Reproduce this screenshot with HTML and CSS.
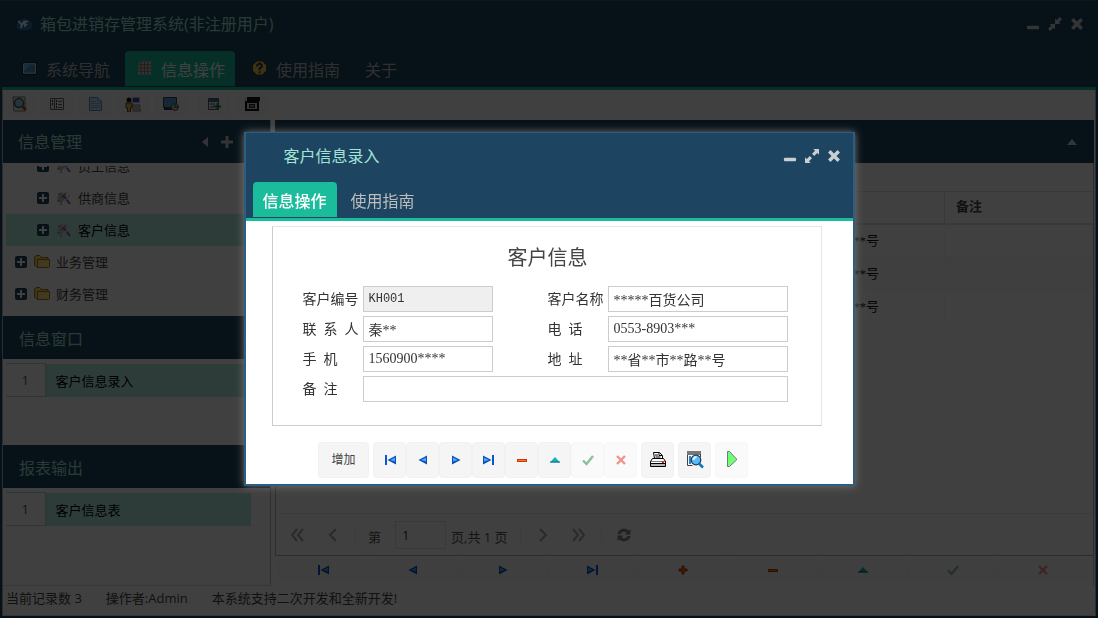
FILE: index.html
```
<!DOCTYPE html>
<html lang="zh-CN">
<head>
<meta charset="utf-8">
<title>箱包进销存管理系统</title>
<link rel="stylesheet" href="styles.css">
</head>
<body>
<svg class="sprite" aria-hidden="true">
  <symbol id="first" viewBox="0 0 16 16"><path d="M3 3h2v10H3z" fill="#0a58c8"/><path d="M14 3.500v9L5.500 8z" fill="#0b4fb8"/><path d="M13 5.500v4L8 8z" fill="#4aa8ff"/></symbol>
  <symbol id="prev" viewBox="0 0 16 16"><path d="M12 3.500v9L3.500 8z" fill="#0b4fb8"/><path d="M11 5.500v4L6 8z" fill="#4aa8ff"/></symbol>
  <symbol id="next" viewBox="0 0 16 16"><path d="M4 3.500v9L12.500 8z" fill="#0b4fb8"/><path d="M5 5.500v4L10 8z" fill="#4aa8ff"/></symbol>
  <symbol id="last" viewBox="0 0 16 16"><path d="M11 3h2v10h-2z" fill="#0a58c8"/><path d="M2 3.500v9L10.500 8z" fill="#0b4fb8"/><path d="M3 5.500v4L8 8z" fill="#4aa8ff"/></symbol>
  <symbol id="plus" viewBox="0 0 16 16"><path d="M7 4h2v3h3v2H9v3H7V9H4V7h3z" fill="#ff6a1c" stroke="#b83200"/></symbol>
  <symbol id="minus" viewBox="0 0 16 16"><path d="M3 7h10v3H3z" fill="#c83a00"/><path d="M4 8h8v1H4z" fill="#ff7a2c"/></symbol>
  <symbol id="up" viewBox="0 0 16 16"><path d="M8 5l5 5.500H3z" fill="#16b0bd"/><path d="M3 9.500h10v1H3z" fill="#08707c"/></symbol>
  <symbol id="check" viewBox="0 0 16 16"><path d="M3 8.500L6.500 12 13 4" fill="none" stroke="#8bbd9f" stroke-width="2.400"/></symbol>
  <symbol id="cross" viewBox="0 0 16 16"><path d="M4 4l8 8M12 4l-8 8" fill="none" stroke="#ef928a" stroke-width="2.400"/></symbol>
  <symbol id="min" viewBox="0 0 16 16"><rect x="1" y="10" width="14" height="4" rx="1.500" fill="currentColor"/></symbol>
  <symbol id="close" viewBox="0 0 16 16"><path d="M4 4l8 8M12 4l-8 8" fill="none" stroke="currentColor" stroke-width="4" stroke-linecap="square"/></symbol>
  <symbol id="expand" viewBox="0 0 16 16"><path d="M9.500 0H16v6.500l-2-2-3.500 3.500-2.500-2.500L11.500 2zM6.500 16H0V9.500l2 2L5.500 8 8 10.500 4.500 14z" fill="currentColor"/></symbol>
  <symbol id="shrink" viewBox="0 0 16 16"><path d="M8 8V2l2 1.500L13.500 0 16 2.500 12.500 6 14 8zM8 8v6l-2-1.500L2.500 16 0 13.500 3.500 10 2 8z" fill="currentColor"/></symbol>
  <symbol id="box" viewBox="0 0 12 12"><rect width="12" height="12" rx="2" fill="#1d4460"/><path d="M6 2v8M2 6h8" stroke="#fff" stroke-width="2"/></symbol>
  <symbol id="tool" viewBox="0 0 16 16"><path d="M1 8l3-5 2-2 1 3 4-2-1 4-4 7-3-1z" fill="#bdbdbd"/><path d="M2 4h2M5 7h3M1 11h3M4 14h2M8 4h2" stroke="#777"/><path d="M7 5l7 9" stroke="#9050c8" stroke-width="2"/><path d="M9 11l5-6" stroke="#d0d0d0" stroke-width="1.500"/></symbol>
  <symbol id="folder" viewBox="0 0 16 16"><path d="M.5 3L2 1.500h4L7.500 3.500H14v10H3L.5 11z" fill="#f4d568" stroke="#a07820"/><path d="M3.500 5.500h12v7l-1 1h-11z" fill="#ffe680" stroke="#a87c18"/></symbol>
</svg>
<div class="app">
  <header class="top">
    <div class="titlebar">
      <svg class="logo" viewBox="0 0 16 16"><path d="M4 14a4 4 0 0 1-3-6 4 4 0 0 1 4-4 4 4 0 0 1 7 1 4.500 4.500 0 0 1 0 9z" fill="#236fa8"/><path d="M2.500 5l3 4 3-4-4 7M9 11V5.500h3.500M9 8.500h2.500" stroke="#fff" stroke-width="1.600" fill="none"/></svg>
      <h1>箱包进销存管理系统(非注册用户)</h1>
      <div class="controls">
        <button aria-label="最小化"><svg><use href="#min"/></svg></button>
        <button aria-label="还原"><svg><use href="#shrink"/></svg></button>
        <button aria-label="关闭"><svg><use href="#close"/></svg></button>
      </div>
    </div>
    <nav class="tabs">
      <a href="#"><svg viewBox="0 0 16 16"><path d="M.5 2.500h15v12H.5z" fill="#4295cf" stroke="#061018"/><path d="M1.500 3.500h13v10h-13z" fill="none" stroke="#dce8f0"/><path d="M2 4h7L2 12z" fill="#72b8e4"/></svg>系统导航</a>
      <a href="#" class="active"><svg viewBox="0 0 16 16"><path d="M4 1h11v14H1V4z" fill="#d8c4c0"/><path d="M4.500 1v14M8 1v14M11.500 1v14M1 4.500h14M1 8h14M1 11.500h14" stroke="#6d7474"/></svg>信息操作</a>
      <a href="#"><svg viewBox="0 0 16 16"><path d="M5 .5h6L15.500 5v6L11 15.500H5L.5 11V5z" fill="#f0c850" stroke="#5a3000"/><path d="M5.500 6.500V5L7 3.500h2L10.500 5v1.500L8 8.500V10M8 11.500v2" stroke="#28343c" stroke-width="2" fill="none"/></svg>使用指南</a>
      <a href="#" class="plain">关于</a>
    </nav>
  </header>
  <div class="toolbar">
    <button aria-label="查找"><svg viewBox="0 0 16 16"><path d="M2 1h12v14H3z" fill="#eee" stroke="#777"/><circle cx="8" cy="7" r="4.500" fill="#8fd4ee" stroke="#555" stroke-width="1.500"/><path d="M11 10l4 4" stroke="#b84818" stroke-width="3"/></svg></button>
    <button aria-label="列表"><svg viewBox="0 0 16 16"><path d="M1.500 2.500h13v11h-13z" fill="#f4f4f4" stroke="#666"/><path d="M5.500 3v10" stroke="#666"/><path d="M7 5h1M7 8h1M7 11h1M3 5h1M3 8h1" stroke="#333" stroke-width="2"/><path d="M9 5.500h4M9 8.500h4M9 11.500h4" stroke="#666"/></svg></button>
    <button aria-label="文档"><svg viewBox="0 0 16 16"><path d="M2.500 1.500h8l4 4v9h-12z" fill="#c4e4fa" stroke="#4c91c8"/><path d="M10.500 1.500v4h4M4 5.500h5M4 7.500h9M4 9.500h9M4 11.500h9" stroke="#78b4e0" fill="none"/></svg></button>
    <button aria-label="用户"><svg viewBox="0 0 16 16"><path d="M7.500 1.500h7v5h-7z" fill="#3848c8" stroke="#bbb"/><path d="M7 9h8v2H7zM8 13h8v2H8z" fill="#eee" stroke="#777"/><circle cx="4" cy="4" r="2.500" fill="#111"/><path d="M1 7h6v5H5.500v4h-3v-4H1z" fill="#eab058" stroke="#664016"/></svg></button>
    <button aria-label="显示"><svg viewBox="0 0 16 16"><path d="M.5 1.500h13v10H.5z" fill="#4b9fce" stroke="#345"/><path d="M1 13h8" stroke="#333" stroke-width="2"/><circle cx="12" cy="11" r="3.500" fill="#d5c86b" stroke="#8040a0"/><path d="M12 8v3h3" stroke="#20a070" stroke-width="2" fill="#58a8e0"/></svg></button>
    <button class="gap" aria-label="导出"><svg viewBox="0 0 16 16"><path d="M2.500 2.500h10v11h-10z" fill="#eee" stroke="#555"/><path d="M2 3h11v3H2z" fill="#37719d"/><path d="M4 8h5M4 11h4" stroke="#555"/><path d="M11.500 7v7M8 10.500h7" stroke="#278548" stroke-width="2"/></svg></button>
    <button aria-label="窗口"><svg viewBox="0 0 16 16"><path d="M3 1h13v4H3zM1 5h14v10H1z" fill="#111"/><path d="M3 7h10v6H3z" fill="#ddd"/><path d="M5 8h6v4H5z" fill="#222"/><path d="M6 10h4" stroke="#eee"/><path d="M2 2l-1 3" stroke="#aaa"/></svg></button>
  </div>
  <div class="work">
    <aside class="side">
      <section class="panel p-tree">
        <h2>信息管理<span><svg class="left" viewBox="0 0 8 12"><path d="M7 1v10L1 6z" fill="currentColor"/></svg><svg viewBox="0 0 12 12"><path d="M4.500 0h3v4.500H12v3H7.500V12h-3V7.500H0v-3h4.500z" fill="currentColor"/></svg></span></h2>
        <ul class="tree">
          <li class="child"><svg class="exp"><use href="#box"/></svg><svg><use href="#tool"/></svg>员工信息</li>
          <li class="child"><svg class="exp"><use href="#box"/></svg><svg><use href="#tool"/></svg>供商信息</li>
          <li class="child on"><svg class="exp"><use href="#box"/></svg><svg><use href="#tool"/></svg>客户信息</li>
          <li><svg class="exp"><use href="#box"/></svg><svg><use href="#folder"/></svg>业务管理</li>
          <li><svg class="exp"><use href="#box"/></svg><svg><use href="#folder"/></svg>财务管理</li>
        </ul>
      </section>
      <section class="panel p-window">
        <h2>信息窗口<span><svg viewBox="0 0 12 12"><path d="M1 9l5-6 5 6z" fill="currentColor"/></svg></span></h2>
        <table class="list"><tr><th>1</th><td>客户信息录入</td></tr></table>
      </section>
      <section class="panel p-report">
        <h2>报表输出<span><svg viewBox="0 0 12 12"><path d="M1 9l5-6 5 6z" fill="currentColor"/></svg></span></h2>
        <table class="list"><tr><th>1</th><td>客户信息表</td></tr></table>
      </section>
    </aside>
    <main class="panel main">
      <h2><span><svg viewBox="0 0 12 12"><path d="M1 9l5-6 5 6z" fill="currentColor"/></svg></span></h2>
      <div class="data">
        <table class="grid">
          <colgroup><col><col class="c-addr"><col class="c-note"></colgroup>
          <thead><tr><th></th><th></th><th>备注</th></tr></thead>
          <tbody>
            <tr><td></td><td>**省**市**路**号</td><td></td></tr>
            <tr><td></td><td>**省**市**路**号</td><td></td></tr>
            <tr><td></td><td>**省**市**路**号</td><td></td></tr>
          </tbody>
        </table>
        <div class="pager">
          <button aria-label="首页"><svg viewBox="0 0 14 14"><path d="M7 1L2 7l5 6M13 1L8 7l5 6"/></svg></button>
          <button aria-label="上一页"><svg viewBox="0 0 14 14"><path d="M10 1L4 7l6 6"/></svg></button>
          <i></i>
          <label for="page">第</label><input id="page" value="1"><span>页,共 1 页</span>
          <i></i>
          <button aria-label="下一页"><svg viewBox="0 0 14 14"><path d="M4 1l6 6-6 6"/></svg></button>
          <button aria-label="末页"><svg viewBox="0 0 14 14"><path d="M1 1l5 6-5 6M7 1l5 6-5 6"/></svg></button>
          <i></i>
          <button class="refresh" aria-label="刷新"><svg viewBox="0 0 14 14"><path d="M.5 6a6.500 6.500 0 0 1 11-3.500L13.500 1v5.500H8L9.500 4.500A4 4 0 0 0 3.500 6zM13.500 8a6.500 6.500 0 0 1-11 3.500L.5 13V7.500H6L4.500 9.500A4 4 0 0 0 10.500 8z"/></svg></button>
        </div>
      </div>
      <div class="records">
        <button aria-label="首条"><svg><use href="#first"/></svg></button>
        <button aria-label="上一条"><svg><use href="#prev"/></svg></button>
        <button aria-label="下一条"><svg><use href="#next"/></svg></button>
        <button aria-label="末条"><svg><use href="#last"/></svg></button>
        <button aria-label="新增"><svg><use href="#plus"/></svg></button>
        <button aria-label="删除"><svg><use href="#minus"/></svg></button>
        <button aria-label="编辑"><svg><use href="#up"/></svg></button>
        <button aria-label="保存"><svg><use href="#check"/></svg></button>
        <button aria-label="取消"><svg><use href="#cross"/></svg></button>
      </div>
    </main>
  </div>
  <footer class="status"><span>当前记录数 3</span><span>操作者:Admin</span><span>本系统支持二次开发和全新开发!</span></footer>
</div>
<div class="overlay">
  <section class="dialog" role="dialog" aria-labelledby="dlg-title">
    <header>
      <div class="dlg-title">
        <h2 id="dlg-title">客户信息录入</h2>
        <div class="controls">
          <button aria-label="最小化"><svg><use href="#min"/></svg></button>
          <button aria-label="最大化"><svg><use href="#expand"/></svg></button>
          <button aria-label="关闭"><svg><use href="#close"/></svg></button>
        </div>
      </div>
      <nav class="tabs"><a href="#" class="active">信息操作</a><a href="#">使用指南</a></nav>
    </header>
    <form class="card">
      <h3>客户信息</h3>
      <div class="fields">
        <label for="f-id">客户编号</label><input id="f-id" class="code" value="KH001" readonly>
        <label for="f-name" class="second">客户名称</label><input id="f-name" value="*****百货公司">
        <label for="f-man">联&ensp;系&ensp;人</label><input id="f-man" value="秦**">
        <label for="f-tel" class="second">电&ensp;话</label><input id="f-tel" value="0553-8903***">
        <label for="f-mob">手&ensp;机</label><input id="f-mob" value="1560900****">
        <label for="f-addr" class="second">地&ensp;址</label><input id="f-addr" value="**省**市**路**号">
        <label for="f-note">备&ensp;注</label><input id="f-note" class="wide" value="">
      </div>
    </form>
    <div class="actions">
      <button class="add">增加</button>
      <div class="group">
        <button aria-label="首条"><svg><use href="#first"/></svg></button>
        <button aria-label="上一条"><svg><use href="#prev"/></svg></button>
        <button aria-label="下一条"><svg><use href="#next"/></svg></button>
        <button aria-label="末条"><svg><use href="#last"/></svg></button>
        <button aria-label="删除"><svg><use href="#minus"/></svg></button>
        <button aria-label="编辑"><svg><use href="#up"/></svg></button>
        <button class="off" aria-label="保存"><svg><use href="#check"/></svg></button>
        <button class="off" aria-label="取消"><svg><use href="#cross"/></svg></button>
      </div>
      <button aria-label="打印"><svg class="big" viewBox="0 0 18 18"><path d="M5.500 7.500l-1-6h6l3 3v3" fill="#fff" stroke="#000"/><path d="M10 1.500v3h3M6 4h3M6.500 6h5" stroke="#000" fill="none"/><path d="M3.500 7.500h11l2 3v5h-15v-5z" fill="#fff" stroke="#000"/><path d="M1.500 10.500h15" stroke="#000" stroke-dasharray="1 1"/><path d="M2 12h14v1H2z" fill="#000"/><path d="M2 13h14v2H2z" fill="#b8b4c0"/><path d="M13 10h2v2h-2z" fill="#e22"/></svg></button>
      <button aria-label="预览"><svg class="big" viewBox="0 0 18 18"><path d="M1 0h14v4H1z" fill="#777"/><path d="M1.500 4v10.500h5M14.500 3v3" stroke="#444" fill="none"/><path d="M3 5h2v8H3z" fill="#2a83d5"/><circle cx="10" cy="9" r="4.800" fill="#54baf8" stroke="#24384c" stroke-width="1.200"/><path d="M7.500 9a3 3 0 0 1 3-3" stroke="#d8f4ff" stroke-width="2" fill="none"/><path d="M13 12.500l4 4" stroke="#0875c5" stroke-width="2.500"/></svg></button>
      <button class="off" aria-label="执行"><svg class="big" viewBox="0 0 18 18"><path d="M4.500 .5v15h2L13.500 9V8l-7-7.500z" fill="#6dff74" stroke="#777"/></svg></button>
    </div>
  </section>
</div>
</body>
</html>
```
FILE: styles.css
```
* { box-sizing: border-box; }
body {
  margin: 0;
  font: 13px/20px "Open Sans", "Noto Sans CJK SC", sans-serif;
  color: #444;
  background: #1d4460;
}
.sprite { position: absolute; width: 0; height: 0; }
h1, h2, h3, ul { margin: 0; padding: 0; font-weight: 400; }
svg { display: block; flex: none; width: 16px; height: 16px; }
button { display: flex; align-items: center; justify-content: center; border: 0; padding: 0; background: none; color: inherit; font: inherit; }
a { color: inherit; text-decoration: none; }
table { border-collapse: collapse; }

.app { display: flex; flex-direction: column; height: 100vh; border: 2px solid #1d4460; border-top-width: 0; }
.top { flex: none; background: #1d4460; border-bottom: 3px solid #1abc9c; border-top: 1px solid #2f5f85; }
.titlebar { display: flex; align-items: center; height: 46px; padding: 0 12px 0 14px; }
.logo { margin-right: 8px; }
.titlebar h1, .dlg-title h2, .panel h2 { font-size: 16px; line-height: 24px; color: #a3e4d7; }
.controls { display: flex; gap: 8px; margin-left: auto; color: #c8ced2; }
.controls svg { width: 14px; height: 14px; }
.tabs { display: flex; font-size: 16px; color: #bdbdbd; }
.top .tabs { gap: 5px; padding: 4px 8px 1px; }
.tabs a { display: flex; align-items: center; height: 35px; padding: 3px 10px 0; border-radius: 4px 4px 0 0; }
.top .tabs a { padding-left: 12px; }
.top .tabs svg { margin: 0 9px 4px 0; width: 15px; }
.top .tabs a.plain { padding-left: 10px; }
.tabs a.active { background: #1abc9c; color: #fff; }

.toolbar { display: flex; flex: none; gap: 6px; height: 30px; padding: 2px 0 4px; background: #fff; }
.toolbar button { width: 32px; height: 24px; border: 1px solid #f7f7f7; border-radius: 4px; background: #fcfcfc; }
.toolbar .gap { margin-left: 5px; }
.work { display: flex; flex: 1; gap: 4px; min-height: 0; padding-right: 1px; background: #fff; }
.work, .toolbar, .status { border-left: 1px solid #a8b4c0; border-right: 1px solid #a8b4c0; }
.side { display: flex; flex-direction: column; width: 268px; flex: none; border-right: 1px solid #a9c8c0; border-bottom: 1px solid #ddd; }
.panel { display: flex; flex-direction: column; min-height: 0; }
.panel h2 { display: flex; align-items: center; flex: none; height: 43px; padding: 0 15px; background: #1d4460; }
.panel h2 span { display: flex; align-items: center; gap: 12px; margin-left: auto; color: #c8ced2; }
.panel h2 svg { width: 12px; height: 12px; }
.panel h2 .left { width: 8px; }
.side .panel h2 { padding-right: 37px; }
.p-tree { flex: 196 0 0; }
.p-window { flex: 129 0 0; }
.p-report { flex: 140 0 0; }
.side .p-window h2, .side .p-report h2 { padding: 3px 16px 0; }
.tree { display: flex; flex: 1; flex-direction: column; justify-content: flex-end; min-height: 0; margin: 3px 3px 6px; overflow: hidden; list-style: none; }
.tree li { display: flex; align-items: center; flex: none; gap: 6px; height: 32px; padding-left: 9px; }
.tree .exp { width: 12px; height: 12px; margin-right: 1px; }
.tree .child { padding-left: 31px; }
.tree .on { background: #b2efe0; color: #000; }
.list { margin: 4px 19px 0 3px; }
.list th { width: 39px; font-weight: 400; border: 1px solid #b0d8cc; border-left: 0; color: #555; }
.list td { height: 33px; padding: 2px 10px 0; background: #b2efe0; color: #000; }

.main { flex: 1; min-width: 0; }
.main h2 { padding-right: 16px; }
.data { display: flex; flex: 1; flex-direction: column; min-height: 0; padding-top: 28px; border: 1px solid #a9b8bc; border-top: 0; }
.grid { table-layout: fixed; width: 100%; font-family: "Liberation Serif", "Noto Sans CJK SC", sans-serif; }
.c-addr { width: 186px; }
.c-note { width: 148px; }
.grid th { height: 32px; padding: 0 11px; border: 1px solid #e2e2e2; border-width: 1px 0 2px 1px; text-align: left; }
.grid td { height: 33px; padding: 2px 16px 0; border: 1px solid #f8f8f8; color: #111; }
.grid tr:nth-child(even) td { background: #fafafa; }
.pager { display: flex; align-items: center; height: 42px; margin-top: auto; padding: 0 3px; border-top: 1px solid #f0f0f0; color: #555; }
.pager button { width: 36px; height: 30px; }
.pager svg { width: 14px; height: 14px; fill: none; stroke: #a8a8a8; stroke-width: 2; }
.pager .refresh svg { fill: #888; stroke: none; }
.pager i { width: 1px; height: 16px; margin: 0 4px; background: #ececec; }
.pager label { margin: 4px 14px 0 8px; }
.pager input { width: 51px; height: 28px; padding: 0 6px; border: 1px solid #e4e4e4; background: #fff; color: #333; font: inherit; }
.pager span { margin: 4px 8px 0 5px; }
.records { display: grid; grid-template-columns: repeat(9, 1fr); flex: none; height: 30px; padding: 3px 5px 5px 3px; border-right: 1px solid #ccc; }
.records button { border: 1px solid #f8f8f8; border-radius: 4px; background: #fcfcfc; }
.records svg, .group svg { width: 16px; height: 16px; }
.status { display: flex; gap: 24px; flex: none; height: 30px; padding: 2px 3px 4px; background: #fff; border-bottom: 1px solid #ddd; }

.overlay { position: fixed; inset: 0; display: flex; align-items: center; justify-content: center; background: rgba(0, 0, 0, .75); }
.dialog { width: 611px; max-width: 100%; background: #fff; border: 2px solid #2c5d82; border-top-width: 1px; box-shadow: 0 0 8px #777; }
.dialog header { background: #1d4460; border-bottom: 3px solid #1abc9c; }
.dlg-title { display: flex; align-items: center; height: 49px; padding: 0 12px 4px 38px; }
.dialog .tabs { gap: 4px; padding: 0 7px 1px; }
.dialog .tabs a.active { font-weight: 500; }
.card { margin: 5px 31px 16px 26px; padding: 17px 34px 23px 30px; border: 1px solid #ccc; border-top-color: #e5e5e5; border-right-color: #e5e5e5; }
.card h3 { margin-bottom: 15px; padding-left: 6px; font-size: 20px; line-height: 27px; text-align: center; color: #444; }
.fields { display: grid; grid-template-columns: 60px 130px 115px 180px; row-gap: 4px; align-items: center; font-size: 14px; color: #333; }
.fields .second { padding-left: 55px; }
.fields input { min-width: 0; height: 26px; padding: 0 5px; border: 1px solid #ccc; background: #fff; color: #333; font: 14px/20px "Liberation Serif", "Noto Sans CJK SC", serif; }
.fields .code { background: #efefef; font: 12px/20px "Liberation Mono", monospace; }
.fields .wide { grid-column: 2 / 5; }
.actions { display: flex; justify-content: center; gap: 4px; padding: 0 32px 6px 0; }
.actions button { width: 33px; height: 36px; border: 1px solid #f1f1f1; border-radius: 4px; background: #f5f5f5; font-size: 12px; }
.actions .add { width: 51px; }
.actions .off { background: #fafafa; border-color: #f7f7f7; }
.group { display: flex; }
.actions .big { width: 18px; height: 18px; }
```
